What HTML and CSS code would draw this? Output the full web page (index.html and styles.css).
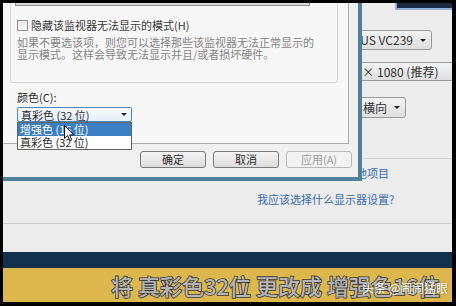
FILE: index.html
```html
<!DOCTYPE html>
<html>
  <head>
    <meta charset="utf-8" />
    <link rel="stylesheet" href="styles.css">
  </head>
  <body>
    <div class="screen">
      <div class="desk">
        <div class="panel">
          <div class="monitor"></div>
          <div class="combo combo-monitor"><span>1. ASUS VC239</span><i class="arrow"></i></div>
          <div class="combo combo-res"><span>1920 × 1080 (推荐)</span></div>
          <div class="combo combo-orient"><span>横向</span><i class="arrow"></i></div>
          <div class="sep"></div>
          <a class="link">放大或缩小文本和其他项目</a>
          <a class="link link-help">我应该选择什么显示器设置?</a>
        </div>
        <div class="rule"></div>
      </div>
      <div class="navy"></div>
      <div class="banner">
        <span class="caption">将 真彩色32位 更改成 增强色16位</span>
        <span class="mark">头条 @闹闹猛眼</span>
      </div>

      <div class="dialog">
        <div class="tabpage">
          <div class="group">
            <div class="group-combo"></div>
            <label class="check-row"><i class="checkbox"></i>隐藏该监视器无法显示的模式(H)</label>
            <p class="hint">如果不要选该项，则您可以选择那些该监视器无法正常显示的<br>显示模式。这样会导致无法显示并且/或者损坏硬件。</p>
          </div>
          <div class="color-label">颜色(C):</div>
          <div class="select"><span>真彩色 (32 位)</span><i class="arrow"></i></div>
        </div>
        <div class="list">
          <div class="option active">增强色 (16 位)</div>
          <div class="option">真彩色 (32 位)</div>
        </div>
        <svg class="cursor" width="11" height="17" viewBox="0 0 11 17">
          <path d="M0.5 0.5 L0.5 13.5 L3.6 10.6 L5.8 15.6 L7.7 14.8 L5.6 9.9 L9.8 9.9 Z" fill="#fff" stroke="#111" stroke-width="1" stroke-linejoin="round"/>
        </svg>
        <div class="buttons">
          <button class="btn">确定</button>
          <button class="btn">取消</button>
          <button class="btn" disabled>应用(A)</button>
        </div>
      </div>
    </div>
  </body>
</html>
```

FILE: styles.css
```css
* {
  box-sizing: border-box;
}
body {
  margin: 0;
  width: 456px;
  height: 306px;
  background: #000;
  overflow: hidden;
  font-family: "Noto Sans CJK SC", "Noto Sans", sans-serif;
  font-size: 11px;
  color: #2c2c2c;
}
.screen {
  position: relative;
  margin: 3px 4px 4px 3px;
  height: 299px;
  overflow: hidden;
  background: #ececec;
}

/* background window */
.desk {
  height: 249px;
}
.panel {
  height: 220px;
  padding-left: 254px;
}
.monitor {
  margin-left: 138px;
  width: 60px;
  height: 7px;
  background: #1b2a44;
  border-left: 2px solid #8db2d6;
  border-bottom: 2px solid #8db2d6;
}
.combo {
  display: flex;
  align-items: center;
  margin-left: 43px;
  border: 1px solid #9a9a9a;
  border-radius: 3px;
  background: linear-gradient(#f4f4f4, #dedede);
  font-size: 12px;
  line-height: 14px;
  color: #333;
}
.combo-monitor {
  margin-top: 20px;
  width: 132px;
  height: 20px;
  justify-content: flex-end;
  gap: 7px;
  padding-right: 5px;
}
.combo-res {
  margin-top: 12px;
  width: 170px;
  height: 19px;
  padding-left: 32px;
  border-radius: 3px 0 0 3px;
}
.combo-orient {
  margin-top: 16px;
  width: 106px;
  height: 21px;
  justify-content: flex-end;
  gap: 7px;
  padding-right: 5px;
}
.arrow {
  display: block;
  width: 0;
  height: 0;
  border-left: 3px solid transparent;
  border-right: 3px solid transparent;
  border-top: 3px solid #222;
}
.sep {
  margin: 40px 0 0 43px;
  height: 1px;
  background: #d4d4d4;
}
.link {
  display: block;
  color: #3a6cb2;
  line-height: 14px;
  margin-top: 7px;
}
.link-help {
  margin-top: 12px;
}
.rule {
  height: 1px;
  background: #cdcdcd;
}
.navy {
  height: 16px;
  background: #14304f;
}
.banner {
  position: relative;
  display: flex;
  justify-content: flex-end;
  align-items: center;
  height: 34px;
  padding-right: 12px;
  background: #dcb74c;
}
.caption {
  font-size: 22px;
  font-weight: 500;
  line-height: 26px;
  color: #b4b4b4;
  -webkit-text-stroke: 1.6px #3a3a3a;
  paint-order: stroke fill;
  white-space: nowrap;
}
.mark {
  position: absolute;
  right: 4px;
  top: 12px;
  font-size: 12px;
  line-height: 16px;
  color: #fff;
  text-shadow: 0 0 2px rgba(0, 0, 0, 0.5);
}

/* dialog */
.dialog {
  position: absolute;
  left: 0;
  top: 0;
  width: 359px;
  height: 178px;
  background: #f0f0f0;
  border-right: 4px solid #4f8199;
  border-bottom: 4px solid #4f8199;
}
.tabpage {
  width: 346px;
  height: 141px;
  padding-left: 7px;
  background: #f7f7f7;
  border-right: 1px solid #aeaeae;
  border-bottom: 1px solid #aeaeae;
}
.group {
  width: 328px;
  height: 80px;
  padding-left: 4px;
  border: 1px solid #d6d6d6;
  border-top: none;
  border-radius: 0 0 3px 3px;
}
.group-combo {
  width: 295px;
  height: 3px;
  background: #d8d8d8;
  border: 1px solid #8e8e8e;
  border-top: none;
}
.check-row {
  display: flex;
  align-items: center;
  gap: 3px;
  margin: 14px 0 0 2px;
  line-height: 11px;
  color: #3a3a3a;
}
.checkbox {
  display: block;
  width: 11px;
  height: 11px;
  border: 1px solid #939393;
  background: linear-gradient(#e6e6e6, #fafafa);
}
.hint {
  margin: 5px 0 0 2px;
  line-height: 12px;
  color: #858585;
  white-space: nowrap;
}
.color-label {
  margin: 8px 0 0 7px;
  line-height: 12px;
}
.select {
  display: flex;
  align-items: center;
  justify-content: space-between;
  margin: 4px 0 0 7px;
  width: 115px;
  height: 15px;
  padding: 0 4px 0 3px;
  border: 1px solid #4d87b8;
  border-radius: 2px;
  background: linear-gradient(#f7fbfe, #e3eef8);
  line-height: 12px;
}
.list {
  position: absolute;
  left: 14px;
  top: 119px;
  width: 115px;
  border: 1px solid #646464;
  background: #fff;
}
.option {
  height: 13px;
  padding-left: 2px;
  line-height: 13px;
}
.option.active {
  background: #3a7ec4;
  color: #fff;
}
.cursor {
  position: absolute;
  left: 61px;
  top: 122px;
}
.buttons {
  display: flex;
  justify-content: flex-end;
  gap: 7px;
  margin-top: 7px;
  padding-right: 6px;
}
.btn {
  width: 66px;
  height: 17px;
  padding: 0;
  border: 1px solid #7a7a7a;
  border-radius: 3px;
  background: linear-gradient(#f4f4f4, #dddddd);
  font-family: inherit;
  font-size: 11px;
  line-height: 13px;
  color: #2c2c2c;
}
.btn:disabled {
  border-color: #b8b8b8;
  background: #f2f2f2;
  color: #9c9c9c;
}
```
